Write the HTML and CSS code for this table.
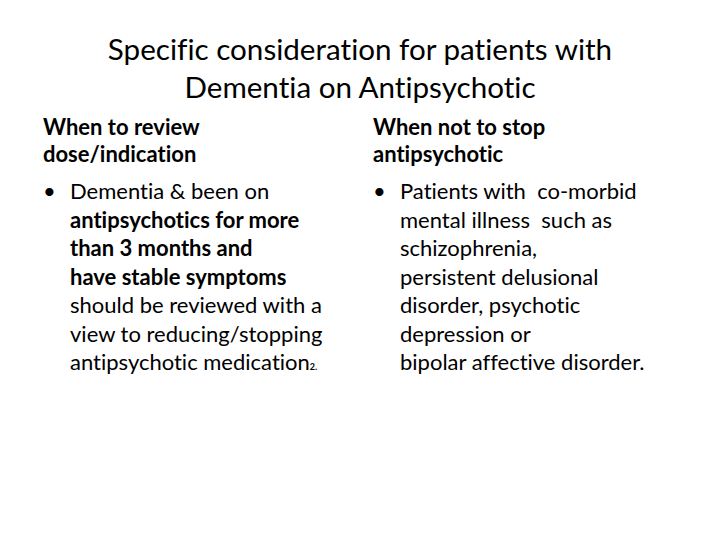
FILE: index.html
```html
<!DOCTYPE html>
<html>
<head>
<meta charset="utf-8">
<link rel="stylesheet" href="styles.css">
</head>
<body>
<div class="slide">
  <h1 class="title">Specific consideration for patients with<br>Dementia on Antipsychotic</h1>
  <div class="cols">
    <div class="col">
      <h2 class="head">When to review<br>dose/indication</h2>
      <ul class="list">
        <li>Dementia &amp; been on<br><b>antipsychotics for more<br>than 3 months and<br>have stable symptoms</b><br>should be reviewed with a<br>view to reducing/stopping<br>antipsychotic medication<span class="ref">2.</span></li>
      </ul>
    </div>
    <div class="col">
      <h2 class="head">When not to stop<br>antipsychotic</h2>
      <ul class="list">
        <li>Patients with&nbsp; co-morbid<br>mental illness&nbsp; such as<br>schizophrenia,<br>persistent delusional<br>disorder, psychotic<br>depression or<br>bipolar affective disorder.</li>
      </ul>
    </div>
  </div>
</div>
</body>
</html>
```
FILE: styles.css
```css
html, body {
  margin: 0;
  padding: 0;
  background: #ffffff;
}
.slide {
  width: 720px;
  height: 540px;
  font-family: Lato, "Open Sans", sans-serif;
  font-variant-ligatures: none;
  color: #000;
  box-sizing: border-box;
  padding-top: 29.5px;
}
.title {
  margin: 0;
  font-weight: 400;
  font-size: 29.6px;
  line-height: 38px;
  text-align: center;
  white-space: nowrap;
}
.cols {
  display: grid;
  grid-template-columns: 330px 330px;
  padding-left: 43px;
  margin-top: 8.5px;
}
.head {
  margin: 0;
  font-size: 22px;
  font-weight: 700;
  line-height: 26.5px;
  white-space: nowrap;
}
.list {
  margin: 10px 0 0 0;
  padding: 0;
  list-style: none;
}
.list li {
  position: relative;
  padding-left: 27px;
  font-size: 22px;
  line-height: 28.5px;
  white-space: nowrap;
}
.list li::before {
  content: "\2022";
  position: absolute;
  left: 0;
  top: 0;
}
.ref {
  font-size: 9px;
  font-weight: 700;
}
```
